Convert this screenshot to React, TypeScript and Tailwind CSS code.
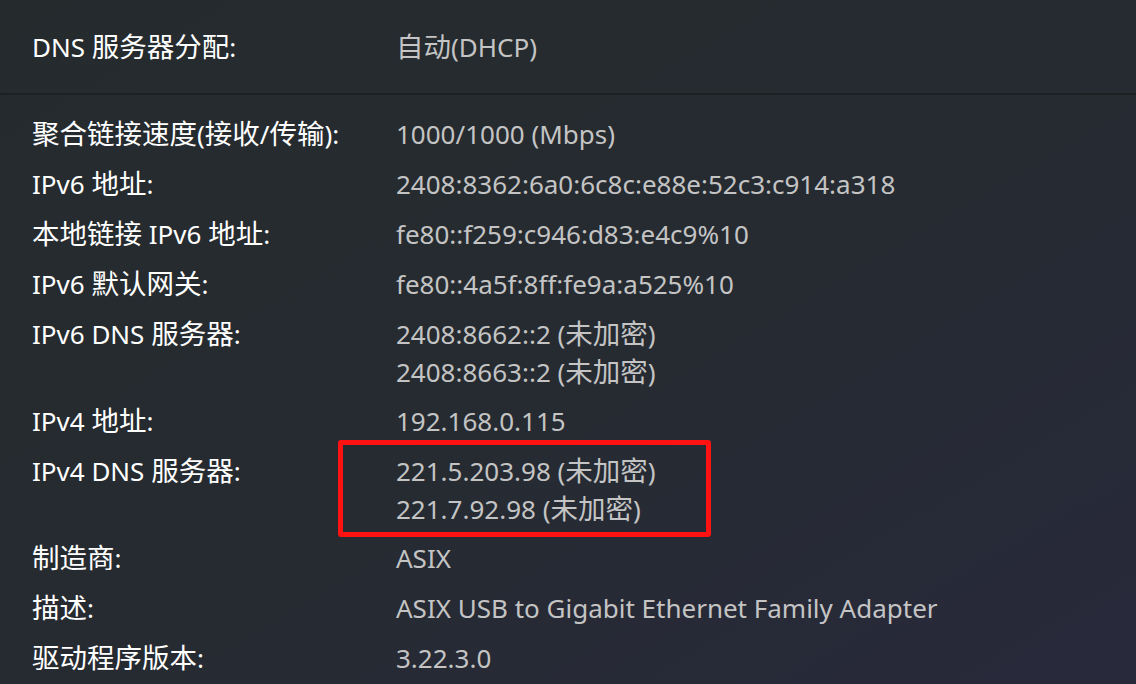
import React from "react";

type Row = { label: string; values: string[]; marked?: boolean };

const rows: Row[] = [
  { label: "聚合链接速度(接收/传输):", values: ["1000/1000 (Mbps)"] },
  { label: "IPv6 地址:", values: ["2408:8362:6a0:6c8c:e88e:52c3:c914:a318"] },
  { label: "本地链接 IPv6 地址:", values: ["fe80::f259:c946:d83:e4c9%10"] },
  { label: "IPv6 默认网关:", values: ["fe80::4a5f:8ff:fe9a:a525%10"] },
  { label: "IPv6 DNS 服务器:", values: ["2408:8662::2 (未加密)", "2408:8663::2 (未加密)"] },
  { label: "IPv4 地址:", values: ["192.168.0.115"] },
  {
    label: "IPv4 DNS 服务器:",
    values: ["221.5.203.98 (未加密)", "221.7.92.98 (未加密)"],
    marked: true,
  },
  { label: "制造商:", values: ["ASIX"] },
  { label: "描述:", values: ["ASIX USB to Gigabit Ethernet Family Adapter"] },
  { label: "驱动程序版本:", values: ["3.22.3.0"] },
];

function Mixed({ text }: { text: string }) {
  const parts = text.split(/([\u3400-\u9fff]+)/);
  return (
    <>
      {parts.map((p, i) =>
        /[\u3400-\u9fff]/.test(p) ? (
          <span key={i} className="text-[27.5px]">
            {p}
          </span>
        ) : (
          <span key={i}>{p}</span>
        )
      )}
    </>
  );
}

function PropRow({ row }: { row: Row }) {
  return (
    <div className="flex py-[6px]">
      <div className="w-[364px] h-[38px] shrink-0 text-white">
        <Mixed text={row.label} />
      </div>
      <div className="relative text-[#c4c4c4]">
        {row.values.map((v) => (
          <div key={v} className="h-[37.5px]">
            <Mixed text={v} />
          </div>
        ))}
        {row.marked && (
          <div className="absolute left-[-58px] top-[-12px] w-[373px] h-[97px] border-[5px] border-[#ff1212] rounded-[3px]" />
        )}
      </div>
    </div>
  );
}

export default function App() {
  return (
    <div
      className="w-[1136px] h-[684px] overflow-hidden bg-gradient-to-br from-[#252b2d] via-[#262b31] to-[#28293b] text-[26px] leading-[38px]"
      style={{ fontFamily: '"Noto Sans", "Noto Sans CJK SC", sans-serif' }}
    >
      <div className="h-[93px] flex items-center pl-[32px]">
        <div className="w-[364px] shrink-0 text-white">
          <Mixed text="DNS 服务器分配:" />
        </div>
        <div className="text-[#c4c4c4]">
          <Mixed text="自动(DHCP)" />
        </div>
      </div>
      <div className="h-[2px] bg-[#1d2123]" />
      <div className="pt-[14px] pl-[32px]">
        {rows.map((r) => (
          <PropRow key={r.label} row={r} />
        ))}
      </div>
    </div>
  );
}
